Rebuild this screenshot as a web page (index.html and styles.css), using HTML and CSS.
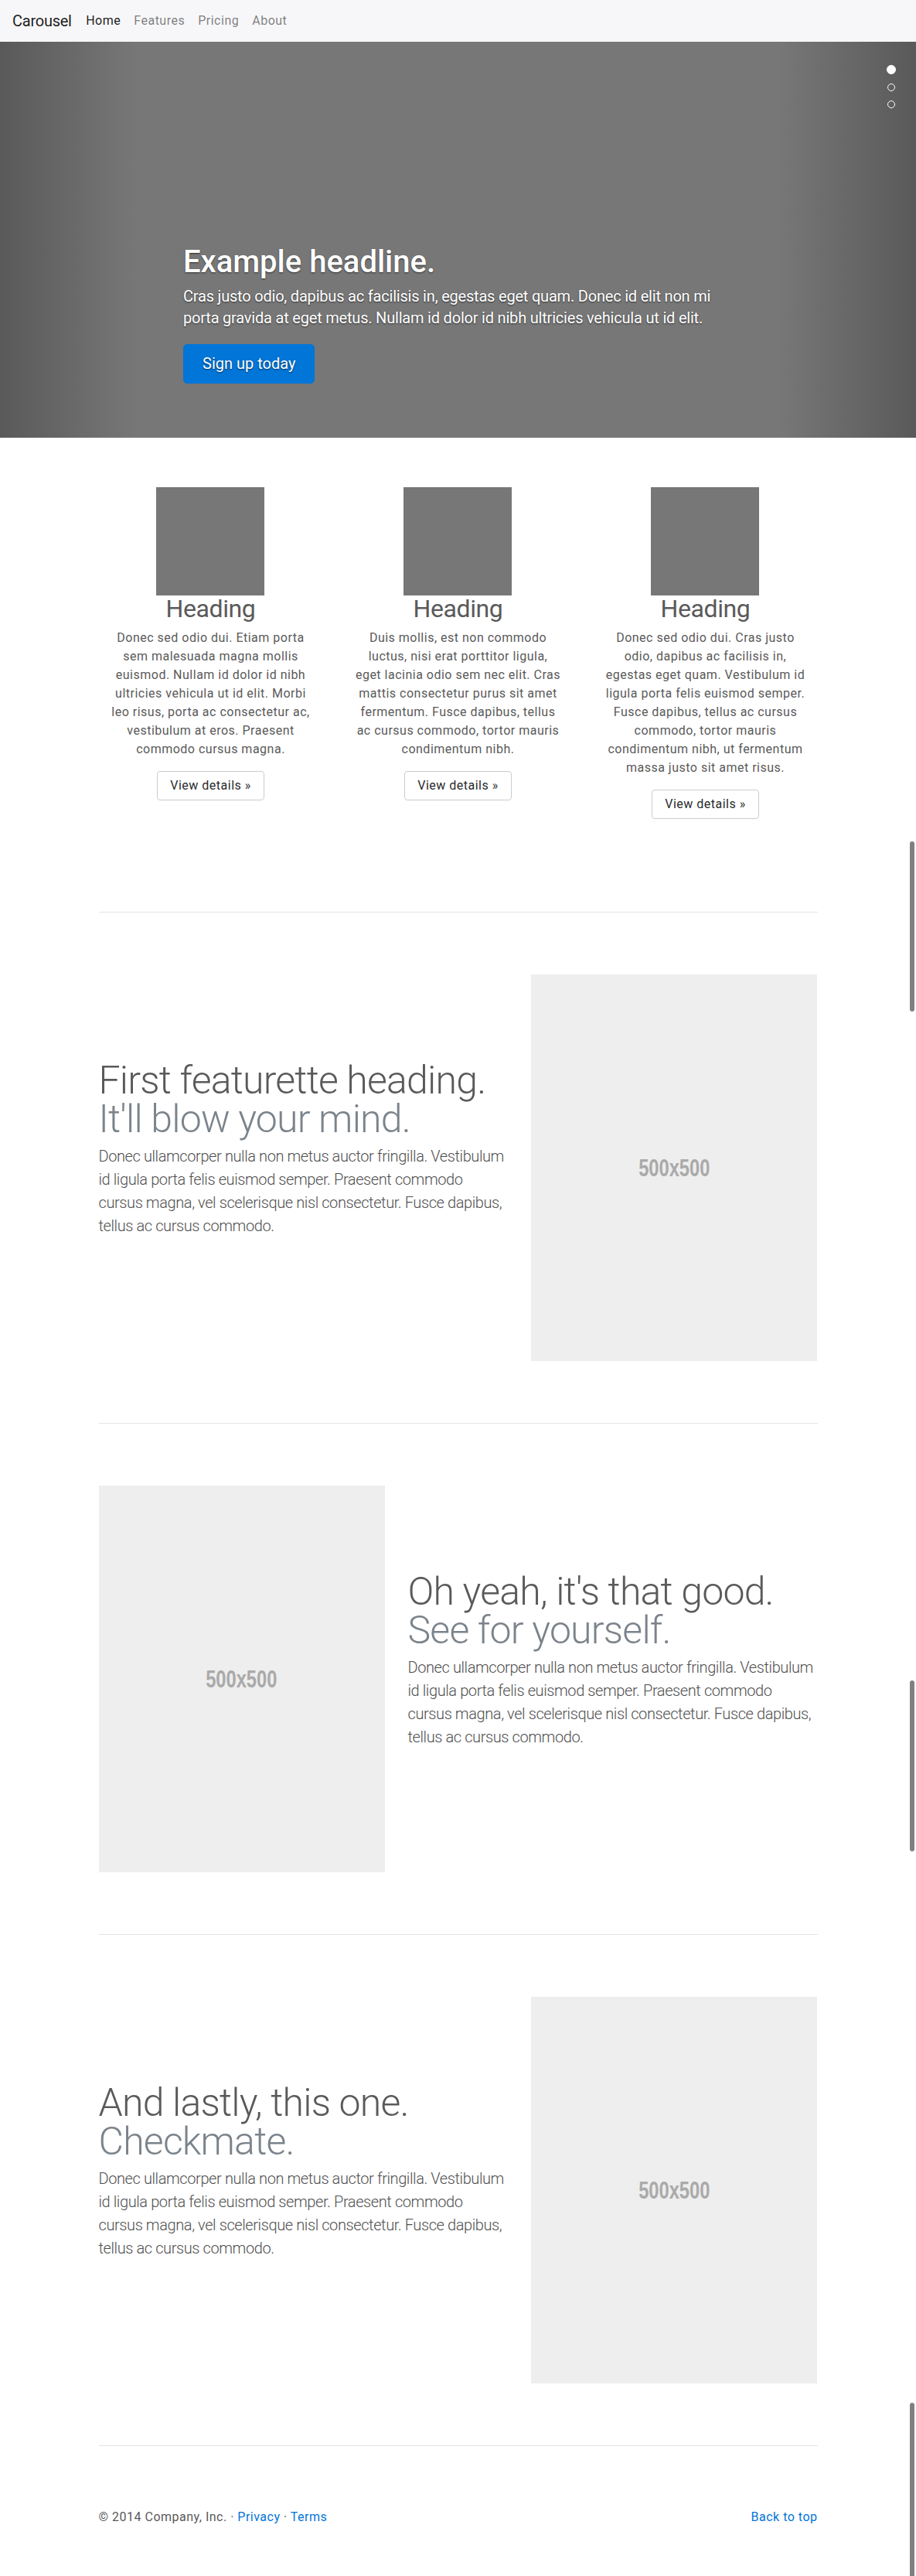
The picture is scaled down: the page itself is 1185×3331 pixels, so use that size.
FILE: index.html
```html
<!DOCTYPE html>
<html lang="en">
<head>
<meta charset="utf-8">
<title>Carousel Template</title>
<link rel="stylesheet" href="styles.css">
</head>
<body>
<nav class="navbar">
  <a class="brand" href="#">Carousel</a>
  <ul class="nav">
    <li><a class="nav-link active" href="#">Home</a></li>
    <li><a class="nav-link" href="#">Features</a></li>
    <li><a class="nav-link" href="#">Pricing</a></li>
    <li><a class="nav-link" href="#">About</a></li>
  </ul>
</nav>

<div class="carousel">
  <div class="shade shade-left"></div>
  <div class="shade shade-right"></div>
  <ol class="indicators">
    <li class="on"></li>
    <li></li>
    <li></li>
  </ol>
  <div class="caption">
    <h1>Example headline.</h1>
    <p>Cras justo odio, dapibus ac facilisis in, egestas eget quam. Donec id elit non mi porta gravida at eget metus. Nullam id dolor id nibh ultricies vehicula ut id elit.</p>
    <div class="cta"><a class="btn-primary" href="#">Sign up today</a></div>
  </div>
</div>

<div class="container marketing">
  <div class="row">
    <div class="col-4">
      <div class="thumb"></div>
      <h2>Heading</h2>
      <p>Donec sed odio dui. Etiam porta sem malesuada magna mollis euismod. Nullam id dolor id nibh ultricies vehicula ut id elit. Morbi leo risus, porta ac consectetur ac, vestibulum at eros. Praesent commodo cursus magna.</p>
      <div class="action"><a class="btn-secondary" href="#">View details &raquo;</a></div>
    </div>
    <div class="col-4">
      <div class="thumb"></div>
      <h2>Heading</h2>
      <p>Duis mollis, est non commodo luctus, nisi erat porttitor ligula, eget lacinia odio sem nec elit. Cras mattis consectetur purus sit amet fermentum. Fusce dapibus, tellus ac cursus commodo, tortor mauris condimentum nibh.</p>
      <div class="action"><a class="btn-secondary" href="#">View details &raquo;</a></div>
    </div>
    <div class="col-4">
      <div class="thumb"></div>
      <h2>Heading</h2>
      <p>Donec sed odio dui. Cras justo odio, dapibus ac facilisis in, egestas eget quam. Vestibulum id ligula porta felis euismod semper. Fusce dapibus, tellus ac cursus commodo, tortor mauris condimentum nibh, ut fermentum massa justo sit amet risus.</p>
      <div class="action"><a class="btn-secondary" href="#">View details &raquo;</a></div>
    </div>
  </div>

  <hr class="divider">

  <div class="row featurette">
    <div class="col-7">
      <h2 class="featurette-heading">First featurette heading. <span class="muted">It'll blow your mind.</span></h2>
      <p class="lead">Donec ullamcorper nulla non metus auctor fringilla. Vestibulum id ligula porta felis euismod semper. Praesent commodo cursus magna, vel scelerisque nisl consectetur. Fusce dapibus, tellus ac cursus commodo.</p>
    </div>
    <div class="col-5">
      <div class="placeholder"><span>500x500</span></div>
    </div>
  </div>

  <hr class="divider">

  <div class="row featurette">
    <div class="col-5">
      <div class="placeholder"><span>500x500</span></div>
    </div>
    <div class="col-7">
      <h2 class="featurette-heading">Oh yeah, it's that good. <span class="muted">See for yourself.</span></h2>
      <p class="lead">Donec ullamcorper nulla non metus auctor fringilla. Vestibulum id ligula porta felis euismod semper. Praesent commodo cursus magna, vel scelerisque nisl consectetur. Fusce dapibus, tellus ac cursus commodo.</p>
    </div>
  </div>

  <hr class="divider">

  <div class="row featurette">
    <div class="col-7">
      <h2 class="featurette-heading">And lastly, this one. <span class="muted">Checkmate.</span></h2>
      <p class="lead">Donec ullamcorper nulla non metus auctor fringilla. Vestibulum id ligula porta felis euismod semper. Praesent commodo cursus magna, vel scelerisque nisl consectetur. Fusce dapibus, tellus ac cursus commodo.</p>
    </div>
    <div class="col-5">
      <div class="placeholder"><span>500x500</span></div>
    </div>
  </div>

  <hr class="divider">
</div>

<footer class="container footer">
  <p>&copy; 2014 Company, Inc. &middot; <a href="#">Privacy</a> &middot; <a href="#">Terms</a></p>
  <p><a href="#">Back to top</a></p>
</footer>

<div class="scroll-thumb t1"></div>
<div class="scroll-thumb t2"></div>
<div class="scroll-thumb t3"></div>
</body>
</html>
```

FILE: styles.css
```css
html, body {
  margin: 0;
}

body {
  position: relative;
  padding-bottom: 48px;
  font-family: Roboto, "Liberation Sans", Arial, sans-serif;
  font-size: 16px;
  line-height: 1.5;
  color: #5a5a5a;
  background: #fff;
}

/* Navbar */
.navbar {
  display: flex;
  align-items: center;
  height: 54px;
  padding: 0 16px;
  box-sizing: border-box;
  background: #f7f7f9;
}

.brand {
  font-size: 20px;
  line-height: 30px;
  letter-spacing: -0.25px;
  color: rgba(0, 0, 0, 0.9);
  text-decoration: none;
  margin-right: 10px;
}

.nav {
  display: flex;
  list-style: none;
  margin: 0;
  padding: 0;
}

.nav-link {
  display: block;
  padding: 8px 8.5px;
  line-height: 24px;
  letter-spacing: 0.5px;
  color: rgba(0, 0, 0, 0.5);
  text-decoration: none;
}

.nav-link.active {
  color: rgba(0, 0, 0, 0.9);
}

/* Carousel */
.carousel {
  position: relative;
  height: 512px;
  margin-bottom: 64px;
  background: #777;
  overflow: hidden;
}

.shade {
  position: absolute;
  top: 0;
  bottom: 0;
  width: 15%;
}

.shade-left {
  left: 0;
  background: linear-gradient(to right, rgba(0, 0, 0, 0.25), rgba(0, 0, 0, 0));
}

.shade-right {
  right: 0;
  background: linear-gradient(to left, rgba(0, 0, 0, 0.25), rgba(0, 0, 0, 0));
}

.indicators {
  position: absolute;
  top: 30px;
  right: 26px;
  width: 12px;
  margin: 0;
  padding: 0;
  list-style: none;
  display: flex;
  flex-direction: column;
  align-items: center;
  gap: 12px;
  z-index: 3;
}

.indicators li {
  width: 10px;
  height: 10px;
  box-sizing: border-box;
  border: 1px solid #fff;
  border-radius: 50%;
}

.indicators li.on {
  width: 12px;
  height: 12px;
  background: #fff;
}

.caption {
  position: absolute;
  left: 20%;
  right: 20%;
  bottom: 70px;
  z-index: 2;
  color: #fff;
  text-shadow: 0 1px 2px rgba(0, 0, 0, 0.6);
}

.caption h1 {
  margin: 0 0 8px;
  font-size: 40px;
  line-height: 1.1;
  font-weight: 500;
}

.caption p {
  margin: 0 0 20px;
  font-size: 20px;
  line-height: 1.4;
  letter-spacing: -0.2px;
}

.cta {
  display: flex;
}

.btn-primary {
  display: inline-block;
  padding: 12px 24px;
  font-size: 20px;
  line-height: 25px;
  color: #fff;
  background: #0275d8;
  border: 1px solid #0275d8;
  border-radius: 5px;
  text-decoration: none;
}

/* Layout */
.container {
  width: 960px;
  margin: 0 auto;
  padding: 0 15px;
  box-sizing: border-box;
}

.row {
  display: flex;
  margin: 0 -15px;
}

.col-4 {
  width: 33.3333%;
  padding: 0 15px;
  box-sizing: border-box;
  text-align: center;
  margin-bottom: 24px;
}

.col-7 {
  width: 58.3333%;
  padding: 0 15px;
  box-sizing: border-box;
}

.col-5 {
  width: 41.6667%;
  padding: 0 15px;
  box-sizing: border-box;
}

/* Marketing */
.thumb {
  width: 140px;
  height: 140px;
  margin: 0 auto;
  background: #777;
}

.col-4 h2 {
  margin: 0 0 8px;
  font-size: 32px;
  line-height: 1.1;
  font-weight: 400;
  letter-spacing: -0.4px;
}

.col-4 p {
  margin: 0 12px 16px;
  letter-spacing: 0.5px;
}

.action {
  display: flex;
  justify-content: center;
  margin-bottom: 16px;
}

.btn-secondary {
  display: inline-block;
  padding: 8px 16px;
  font-size: 16px;
  line-height: 20px;
  letter-spacing: 0.5px;
  color: #292b2c;
  background: #fff;
  border: 1px solid #ccc;
  border-radius: 4px;
  text-decoration: none;
}

.divider {
  margin: 80px 0;
  height: 0;
  border: 0;
  border-top: 1px solid rgba(0, 0, 0, 0.1);
}

/* Featurettes */
.featurette-heading {
  margin: 112px 0 8px;
  font-size: 50px;
  line-height: 1;
  font-weight: 300;
  letter-spacing: -0.8px;
  color: #5a5a5a;
}

.muted {
  color: #7b838b;
}

.lead {
  max-width: 526px;
  margin: 0 0 16px;
  font-size: 20px;
  line-height: 30px;
  font-weight: 300;
  letter-spacing: -0.4px;
  color: #4f4f4f;
}

.placeholder {
  height: 500px;
  background: #eee;
  display: flex;
  align-items: center;
  justify-content: center;
}

.placeholder span {
  display: inline-block;
  font-family: "Liberation Sans", Arial, sans-serif;
  font-weight: bold;
  font-size: 32px;
  color: #aaa;
  transform: scaleX(0.74);
}

/* Footer */
.footer {
  display: flex;
  justify-content: space-between;
}

.footer p {
  margin: 0 0 16px;
  letter-spacing: 0.5px;
}

.footer a {
  color: #0275d8;
  text-decoration: none;
}

/* Overlay scrollbar thumbs captured in the screenshot */
.scroll-thumb {
  position: absolute;
  right: 2px;
  width: 6px;
  background: #808080;
  border-radius: 3px;
}

.t1 {
  top: 1088px;
  height: 220px;
}

.t2 {
  top: 2173px;
  height: 221px;
}

.t3 {
  top: 3107px;
  height: 224px;
  border-radius: 3px 3px 0 0;
}
```
